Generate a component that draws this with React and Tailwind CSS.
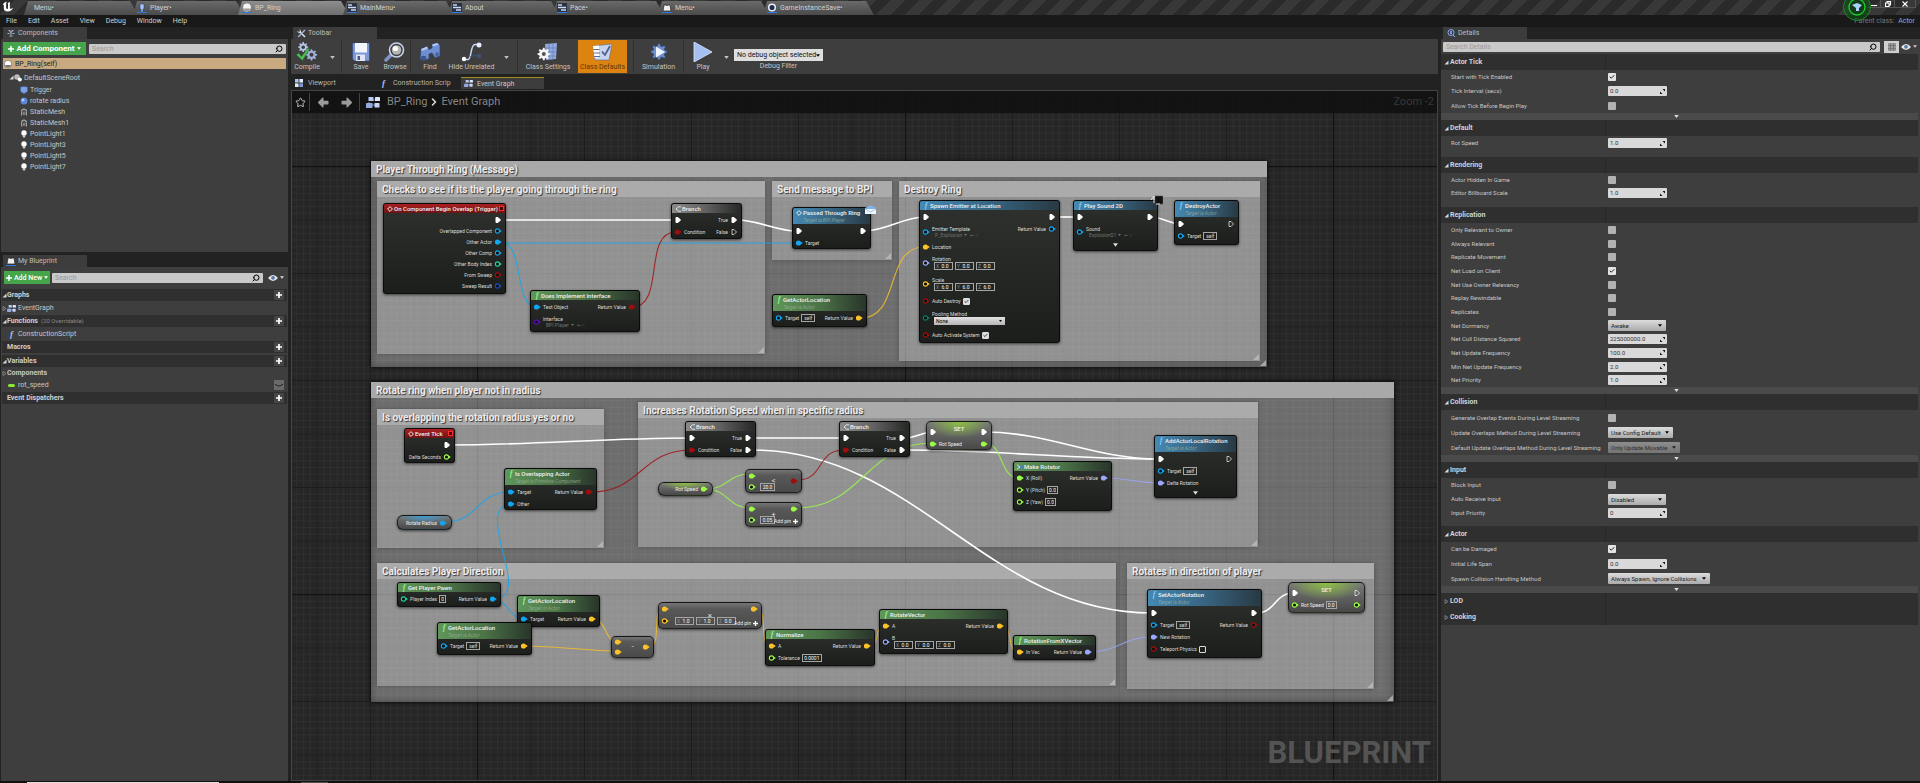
import { useState } from 'react';
import { ArrowBigLeft, ArrowBigRight, Check, ChevronRight, Search, Star } from 'lucide-react';

const DOC_TABS = [
  { name: 'Menu•', icon: null },
  { name: 'Player•', icon: 'pawn' },
  { name: 'BP_Ring', icon: 'ball' },
  { name: 'MainMenu•', icon: 'widget' },
  { name: 'About', icon: 'widget' },
  { name: 'Pace•', icon: 'widget' },
  { name: 'Menu•', icon: 'level' },
  { name: 'GameInstanceSave•', icon: 'ring' },
];

const COMPONENTS = [
  { name: 'Trigger', icon: 'box' },
  { name: 'rotate radius', icon: 'sphere' },
  { name: 'StaticMesh', icon: 'mesh' },
  { name: 'StaticMesh1', icon: 'mesh' },
  { name: 'PointLight1', icon: 'light' },
  { name: 'PointLight3', icon: 'light' },
  { name: 'PointLight5', icon: 'light' },
  { name: 'PointLight7', icon: 'light' },
];

const DETAILS = [
  {
    title: 'Actor Tick', body: 'min-h-[43px]', more: true,
    rows: [
      { label: 'Start with Tick Enabled', check: true },
      { label: 'Tick Interval (secs)', num: '0.0' },
      { label: 'Allow Tick Before Begin Play', check: false },
    ],
  },
  { title: 'Default', body: 'min-h-[21px] pb-[7px]', rows: [{ label: 'Rot Speed', num: '1.0' }] },
  {
    title: 'Rendering', body: 'min-h-[34px] pb-[7px]',
    rows: [
      { label: 'Actor Hidden In Game', check: false },
      { label: 'Editor Billboard Scale', num: '1.0' },
    ],
  },
  {
    title: 'Replication', body: 'min-h-[164px]', more: true,
    rows: [
      { label: 'Only Relevant to Owner', check: false },
      { label: 'Always Relevant', check: false },
      { label: 'Replicate Movement', check: false },
      { label: 'Net Load on Client', check: true },
      { label: 'Net Use Owner Relevancy', check: false },
      { label: 'Replay Rewindable', check: false },
      { label: 'Replicates', check: false },
      { label: 'Net Dormancy', select: 'Awake', w: 'w-[58px]' },
      { label: 'Net Cull Distance Squared', num: '225000000.0' },
      { label: 'Net Update Frequency', num: '100.0' },
      { label: 'Min Net Update Frequency', num: '2.0' },
      { label: 'Net Priority', num: '1.0' },
    ],
  },
  {
    title: 'Collision', body: 'min-h-[45px]', more: true,
    rows: [
      { label: 'Generate Overlap Events During Level Streaming', check: false },
      { label: 'Update Overlaps Method During Level Streaming', select: 'Use Config Default', w: 'w-[65px]' },
      { label: 'Default Update Overlaps Method During Level Streaming', select: 'Only Update Movable', w: 'w-[72px]', disabled: true },
    ],
  },
  {
    title: 'Input', body: 'min-h-[48px] pb-[6px]',
    rows: [
      { label: 'Block Input', check: false },
      { label: 'Auto Receive Input', select: 'Disabled', w: 'w-[58px]' },
      { label: 'Input Priority', num: '0' },
    ],
  },
  {
    title: 'Actor', body: 'min-h-[44px]', more: true,
    rows: [
      { label: 'Can be Damaged', check: true },
      { label: 'Initial Life Span', num: '0.0' },
      { label: 'Spawn Collision Handling Method', select: 'Always Spawn, Ignore Collisions', w: 'w-[102px]' },
    ],
  },
  { title: 'LOD', closed: true },
  { title: 'Cooking', closed: true },
];

// where the graph's origin sits relative to the view
const PAN = { x: -292, y: -91 };

const C = {
  exec: '#ffffff',
  obj: '#12a5f0',
  red: '#a00d0d',
  vec: '#fdc227',
  rot: '#9aa8ff',
  float: '#9bfb45',
  int: '#1fd79c',
  struct: '#1450c8',
  cls: '#5a12b0',
  enm: '#0b7d6b',
};

const COMMENTS = [
  { t: 'Player Through Ring (Message)', x: 371, y: 161, w: 896, h: 206, outer: true },
  { t: 'Checks to see if its the player going through the ring', x: 377, y: 181, w: 388, h: 173 },
  { t: 'Send message to BPI', x: 772, y: 181, w: 120, h: 79 },
  { t: 'Destroy Ring', x: 899, y: 181, w: 361, h: 180 },
  { t: 'Rotate ring when player not in radius', x: 371, y: 382, w: 1023, h: 320, outer: true },
  { t: 'Is overlapping the rotation radius yes or no', x: 377, y: 409, w: 227, h: 139 },
  { t: 'Increases Rotation Speed when in specific radius', x: 638, y: 402, w: 620, h: 145 },
  { t: 'Calculates Player Direction', x: 377, y: 563, w: 739, h: 123 },
  { t: 'Rotates in direction of player', x: 1127, y: 563, w: 247, h: 126 },
];

// [color, x1, y1, x2, y2, tangent]
const WIRES = [
  ['exec', 502, 220, 676, 220],
  ['obj', 502, 243, 796, 243],
  ['obj', 502, 243, 536, 307, 22],
  ['red', 632, 307, 676, 232, 34],
  ['exec', 738, 220, 796, 231],
  ['exec', 865, 231, 924, 217],
  ['vec', 861, 318, 924, 247, 40],
  ['exec', 1054, 217, 1079, 217],
  ['exec', 1152, 217, 1180, 224],
  ['exec', 450, 445, 690, 438],
  ['red', 591, 492, 691, 450, 50],
  ['obj', 445, 522, 510, 492, 34],
  ['obj', 495, 599, 522, 619, 10],
  ['vec', 593, 619, 618, 642, 14],
  ['vec', 526, 646, 618, 651],
  ['vec', 649, 647, 664, 608, 14],
  ['vec', 756, 609, 771, 646, 14],
  ['vec', 868, 646, 886, 626, 14],
  ['vec', 1001, 626, 1019, 652, 14],
  ['rot', 1088, 652, 1153, 637, 30],
  ['exec', 1256, 613, 1294, 593, 20],
  ['exec', 752, 438, 844, 438],
  ['exec', 752, 450, 1152, 613, 165],
  ['red', 797, 480, 844, 450, 28],
  ['float', 797, 508, 932, 443, 66],
  ['float', 706, 489, 750, 474, 22],
  ['float', 706, 489, 750, 508, 22],
  ['exec', 906, 438, 932, 432],
  ['exec', 906, 450, 1159, 459, 90],
  ['exec', 984, 432, 1159, 459, 66],
  ['float', 984, 443, 1019, 478, 20],
  ['rot', 1106, 478, 1159, 483, 20],
];

const BRANCH_ROWS = falseOn => [
  { l: { pin: 'exec', on: true }, r: { pin: 'exec', on: true, label: 'True' } },
  { l: { pin: 'red', on: true, label: 'Condition' }, r: { pin: 'exec', on: falseOn, label: 'False' } },
];
const ACTOR_LOC = self => [
  { l: { pin: 'obj', on: !self, label: 'Target', self }, r: { pin: 'vec', on: true, label: 'Return Value' } },
];
const EXEC_ROW = { l: { pin: 'exec', on: true }, r: { pin: 'exec', on: true } };

const NODES = [
  {
    kind: 'event', title: 'On Component Begin Overlap (Trigger)', x: 383, y: 203, w: 123, h: 91, delegate: true,
    rows: [
      { r: { pin: 'exec', on: true } },
      { r: { pin: 'obj', label: 'Overlapped Component' } },
      { r: { pin: 'obj', on: true, label: 'Other Actor' } },
      { r: { pin: 'obj', label: 'Other Comp' } },
      { r: { pin: 'int', label: 'Other Body Index' } },
      { r: { pin: 'red', label: 'From Sweep' } },
      { r: { pin: 'struct', label: 'Sweep Result' } },
    ].map(r => ({ ...r, h: 'h-[11px]' })),
  },
  {
    kind: 'pure', title: 'Does Implement Interface', x: 530, y: 290, w: 110, h: 42,
    rows: [
      { l: { pin: 'obj', on: true, label: 'Test Object' }, r: { pin: 'red', on: true, label: 'Return Value' } },
      { h: 'h-[17px]', l: { pin: 'cls', label: 'Interface', asset: 'BPI Player' } },
    ],
  },
  { kind: 'branch', title: 'Branch', x: 671, y: 203, w: 71, h: 36, rows: BRANCH_ROWS(false) },
  {
    kind: 'func', icon: 'event', title: 'Passed Through Ring', sub: 'Target is BPI Player', x: 792, y: 207, w: 79, h: 42, badge: 'mail',
    rows: [EXEC_ROW, { l: { pin: 'obj', on: true, label: 'Target' } }],
  },
  { kind: 'pure', title: 'GetActorLocation', sub: 'Target is Actor', x: 772, y: 294, w: 95, h: 33, rows: ACTOR_LOC(true) },
  {
    kind: 'func', title: 'Spawn Emitter at Location', x: 919, y: 200, w: 141, h: 143,
    rows: [
      EXEC_ROW,
      { h: 'h-[18px]', l: { pin: 'obj', label: 'Emitter Template', asset: 'P_Explosion' }, r: { pin: 'obj', label: 'Return Value' } },
      { l: { pin: 'vec', on: true, label: 'Location' } },
      { h: 'h-[20px]', l: { pin: 'rot', label: 'Rotation', axes: ['0.0', '0.0', '0.0'] } },
      { h: 'h-[22px]', l: { pin: 'vec', label: 'Scale', axes: ['6.0', '6.0', '6.0'] } },
      { l: { pin: 'red', label: 'Auto Destroy', check: true } },
      { h: 'h-[22px]', l: { pin: 'enm', label: 'Pooling Method', select: 'None' } },
      { l: { pin: 'red', label: 'Auto Activate System', check: true } },
    ],
  },
  {
    kind: 'func', title: 'Play Sound 2D', x: 1073, y: 200, w: 85, h: 51, badge: 'latent', more: true,
    rows: [EXEC_ROW, { h: 'h-[18px]', l: { pin: 'obj', label: 'Sound', asset: 'Explosion01' } }],
  },
  {
    kind: 'func', title: 'DestroyActor', sub: 'Target is Actor', x: 1174, y: 200, w: 65, h: 45,
    rows: [
      { l: { pin: 'exec', on: true }, r: { pin: 'exec' } },
      { l: { pin: 'obj', label: 'Target', self: true } },
    ],
  },
  {
    kind: 'event', title: 'Event Tick', x: 404, y: 428, w: 51, h: 35, delegate: true,
    rows: [{ r: { pin: 'exec', on: true } }, { r: { pin: 'float', label: 'Delta Seconds' } }],
  },
  {
    kind: 'pure', title: 'Is Overlapping Actor', sub: 'Target is Primitive Component', x: 504, y: 468, w: 93, h: 42,
    rows: [
      { l: { pin: 'obj', on: true, label: 'Target' }, r: { pin: 'red', on: true, label: 'Return Value' } },
      { l: { pin: 'obj', on: true, label: 'Other' } },
    ],
  },
  { kind: 'branch', title: 'Branch', x: 685, y: 421, w: 71, h: 36, rows: BRANCH_ROWS(true) },
  { kind: 'branch', title: 'Branch', x: 839, y: 421, w: 71, h: 36, rows: BRANCH_ROWS(true) },
  {
    kind: 'pure', icon: 'make', title: 'Make Rotator', x: 1013, y: 461, w: 99, h: 50,
    rows: [
      { l: { pin: 'float', on: true, label: 'X (Roll)' }, r: { pin: 'rot', on: true, label: 'Return Value' } },
      { l: { pin: 'float', label: 'Y (Pitch)', box: '0.0' } },
      { l: { pin: 'float', label: 'Z (Yaw)', box: '0.0' } },
    ],
  },
  {
    kind: 'func', title: 'AddActorLocalRotation', sub: 'Target is Actor', x: 1154, y: 435, w: 83, h: 63, more: true,
    rows: [
      { l: { pin: 'exec', on: true }, r: { pin: 'exec' } },
      { l: { pin: 'obj', label: 'Target', self: true } },
      { l: { pin: 'rot', on: true, label: 'Delta Rotation' } },
    ],
  },
  {
    kind: 'pure', title: 'Get Player Pawn', x: 397, y: 582, w: 104, h: 25,
    rows: [{ l: { pin: 'int', label: 'Player Index', box: '0', boxW: 'w-[7px]' }, r: { pin: 'obj', on: true, label: 'Return Value' } }],
  },
  { kind: 'pure', title: 'GetActorLocation', sub: 'Target is Actor', x: 517, y: 595, w: 83, h: 32, rows: ACTOR_LOC(false) },
  { kind: 'pure', title: 'GetActorLocation', sub: 'Target is Actor', x: 437, y: 622, w: 95, h: 33, rows: ACTOR_LOC(true) },
  {
    kind: 'pure', title: 'Normalize', x: 765, y: 629, w: 110, h: 37,
    rows: [
      { l: { pin: 'vec', on: true, label: 'A' }, r: { pin: 'vec', on: true, label: 'Return Value' } },
      { l: { pin: 'float', label: 'Tolerance', box: '0.0001', boxW: 'w-[20px]' } },
    ],
  },
  {
    kind: 'pure', title: 'RotateVector', x: 879, y: 609, w: 129, h: 45,
    rows: [
      { l: { pin: 'vec', on: true, label: 'A' }, r: { pin: 'vec', on: true, label: 'Return Value' } },
      { h: 'h-[20px]', l: { pin: 'rot', label: 'B', axes: ['0.0', '0.0', '0.0'] } },
    ],
  },
  {
    kind: 'pure', title: 'RotationFromXVector', x: 1013, y: 635, w: 83, h: 25,
    rows: [{ l: { pin: 'vec', on: true, label: 'In Vec' }, r: { pin: 'rot', on: true, label: 'Return Value' } }],
  },
  {
    kind: 'func', title: 'SetActorRotation', sub: 'Target is Actor', x: 1147, y: 589, w: 115, h: 69,
    rows: [
      EXEC_ROW,
      { l: { pin: 'obj', label: 'Target', self: true }, r: { pin: 'red', label: 'Return Value' } },
      { l: { pin: 'rot', on: true, label: 'New Rotation' } },
      { l: { pin: 'red', label: 'Teleport Physics', check: false } },
    ],
  },
];

const HEADER = {
  event: 'bg-linear-to-b from-[#ad2020] to-[#6c1414]',
  pure: 'bg-linear-to-r from-[#5f965a] via-[#4b7447] to-[#28352a]',
  func: 'bg-linear-to-r from-[#4489b4] via-[#376582] to-[#283943]',
  branch: 'bg-linear-to-r from-[#8a8a8a] via-[#606060] to-[#262826]',
};

const SHADE = 'border border-black/70 shadow-[0_1px_3px_rgba(0,0,0,0.6)]';

/* ---------- small icons ---------- */

function TabIcon({ type }) {
  if (!type) return null;
  return (
    <svg viewBox="0 0 10 10" className="h-[10px] w-[10px] shrink-0">
      <rect y="9" width="10" height="1" fill="#2d7be0" />
      {type === 'pawn' && <path d="M3 1h4v5H6v3H4V6H3z" fill="#a9c3f5" stroke="#26457c" strokeWidth=".6" />}
      {type === 'ball' && <><circle cx="5" cy="4.5" r="3.9" fill="#f4f4f4" /><path d="M1.2 5.5a4 4 0 0 0 7.6 0z" fill="#999" /></>}
      {type === 'widget' && (
        <>
          <rect width="10" height="9" fill="#2a3140" />
          <path d="M1 2h4M1 4.500h8M4 7h5" stroke="#c9d8f6" strokeWidth="1.400" />
        </>
      )}
      {type === 'level' && <path d="M1 8l1-6h2.500l.5 1 .5-1H8l1 6z" fill="#eee" stroke="#222" strokeWidth=".7" />}
      {type === 'ring' && <circle cx="5" cy="4.500" r="3.300" fill="#1f2c4c" stroke="#e8eefc" strokeWidth="1.500" />}
    </svg>
  );
}

function TreeIcon({ type }) {
  return (
    <svg viewBox="0 0 8 8" className="h-2 w-2 shrink-0">
      {type === 'root' && <><circle cx="3" cy="3" r="2.800" fill="#bbb" /><circle cx="5.800" cy="5.500" r="2" fill="#fff" /></>}
      {type === 'self' && <><circle cx="4" cy="4" r="3.700" fill="#fff" stroke="#555" strokeWidth=".6" /><path d="M.6 5a3.700 3.700 0 0 0 6.800 0z" fill="#777" /></>}
      {type === 'box' && <path d="M.5 1L4 .5l3.500.5v4.500L4 7.800.5 5.500z" fill="#7ba0e8" stroke="#41639f" strokeWidth=".6" />}
      {type === 'sphere' && <><circle cx="4" cy="4" r="3.500" fill="#5c86d8" /><circle cx="3" cy="3" r="1.300" fill="#bcd2ff" /></>}
      {type === 'mesh' && <path d="M1.500 7.500V4a2.500 2.500 0 0 1 5 0v3.500M3.200 7V4.500a.9.900 0 0 1 1.700 0V7M1 2.500L4 .7l3 1.800" fill="none" stroke="#aaa" strokeWidth=".9" />}
      {type === 'light' && <><circle cx="4" cy="2.900" r="2.700" fill="#fff" /><path d="M2.700 5h2.600v1.700L4 7.900 2.700 6.700z" fill="#ccc" /></>}
      {type === 'pins' && <path d="M1.500 1.500h1.500v1.500h2V1.500h1.500M4 3v3M2.500 7h3M.5 4.500h2M5.500 4.500h2" fill="none" stroke="#a9b8d8" strokeWidth="1" />}
    </svg>
  );
}

function GraphIcon({ className }) {
  return (
    <svg viewBox="0 0 14 11" className={className}>
      <path d="M3 5v4M6 3h3M6 8h3" stroke="#7d8fb8" strokeWidth="1" />
      <rect x="2.500" y="0" width="5" height="4" rx=".6" fill="#b9c9f0" />
      <rect x="9" y="0" width="5" height="4" rx=".6" fill="#dfe7fb" />
      <rect x="0" y="6" width="6.500" height="5" rx=".6" fill="#93a9e0" />
      <rect x="8.500" y="6" width="5" height="4.500" rx=".6" fill="#c7d4f5" />
    </svg>
  );
}

function ViewportIcon() {
  return (
    <svg viewBox="0 0 8 8" className="mr-px ml-px h-[8px] w-[8px]">
      <rect width="3.600" height="3.600" fill="#a9c4f0" />
      <rect x="4.400" width="3.600" height="3.600" fill="#e4ecfb" />
      <rect y="4.400" width="3.600" height="3.600" fill="#dde8fb" />
      <rect x="4.400" y="4.400" width="3.600" height="3.600" fill="#7f9cd4" />
    </svg>
  );
}

function Eye() {
  return (
    <svg viewBox="0 0 10 6" className="h-[6px] w-[10px]">
      <path d="M0 3Q5-3 10 3 5 9 0 3z" fill="#e8e8e8" />
      <circle cx="5" cy="2.800" r="1.900" fill="#5779a8" />
    </svg>
  );
}

function Caret({ className }) {
  return (
    <svg viewBox="0 0 6 4" className={className ?? 'h-[3px] w-[5px]'}>
      <path d="M0 0h6L3 4z" fill="currentColor" />
    </svg>
  );
}

function Twisty({ open }) {
  return (
    <svg viewBox="0 0 5 5" className="h-[5px] w-[5px] shrink-0">
      {open
        ? <path d="M4.500.5v4h-4z" fill="#d8d8d8" />
        : <path d="M1 .5v4L4 2.500z" fill="none" stroke="#999" strokeWidth=".7" />}
    </svg>
  );
}

function Fn({ className }) {
  return <i className={`font-['Liberation_Serif',serif] font-bold leading-none ${className}`}>f</i>;
}

/* ---------- toolbar ---------- */

const GEAR = 'M9 1h2l.5 2.300 1.600.7 2-1.300 1.400 1.400-1.300 2 .7 1.600L18 8v2l-2.100.5-.7 1.600 1.300 2-1.400 1.400-2-1.300-1.600.7L11 17H9l-.5-2.100-1.600-.7-2 1.300-1.400-1.400 1.300-2-.7-1.600L2 10V8l2.100-.3.7-1.600-1.300-2 1.400-1.400 2 1.300 1.600-.7z';

function ToolIcon({ type }) {
  return (
    <svg viewBox="0 0 22 20" className="h-[20px] w-[22px]">
      {type === 'compile' && (
        <>
          <path d={GEAR} transform="translate(1 -.5) scale(.62)" fill="#b4c3e6" />
          <circle cx="7.200" cy="5.200" r="1.800" fill="#3e3e3e" />
          <path d={GEAR} transform="translate(8.500 6.500) scale(.7)" fill="#9fb0d8" />
          <circle cx="15.500" cy="12.800" r="2" fill="#3e3e3e" />
          <path d="M.5 13l2-2 3 3.500L12 6l1.500 1L6.500 18.500z" fill="#4fc05a" stroke="#256b2c" strokeWidth=".5" />
        </>
      )}
      {type === 'save' && (
        <>
          <path d="M2.500 1h17v18h-15l-2-2z" fill="#7c98d8" stroke="#2c3f6c" strokeWidth=".6" />
          <rect x="5" y="1" width="12" height="9.500" fill="#f2f5fc" />
          <rect x="6" y="12.500" width="9" height="6.500" fill="#dfe5f3" />
          <rect x="7.500" y="14" width="2.500" height="4" fill="#45588a" />
        </>
      )}
      {type === 'browse' && (
        <>
          <path d="M7 13l-5 5" stroke="#7f93c8" strokeWidth="3.500" strokeLinecap="round" />
          <circle cx="12.500" cy="8" r="7" fill="#3d3d3d" stroke="#c7d3ef" strokeWidth="1.600" />
          <circle cx="12.500" cy="8" r="4.800" fill="#b5b5b5" />
          <circle cx="11.500" cy="6.500" r="2.600" fill="#fff" />
        </>
      )}
      {type === 'find' && (
        <>
          <path d="M2 7l6-2.500 2 3 3-1.500V2.500l5-1.500 3 2v11l-5 2-3-5-3 1v5l-6 1.500L1 17z" fill="#6f8fd2" stroke="#2c406e" strokeWidth=".7" />
          <path d="M2 7l6-2.500 1 2-6 2.500zM13 2.500L18 1l2 1.500-6 2z" fill="#b4c8f2" />
          <ellipse cx="4.500" cy="16" rx="2.800" ry="2.200" fill="#3b568f" />
          <ellipse cx="18" cy="12.500" rx="2" ry="2.200" fill="#4a66a4" />
        </>
      )}
      {type === 'hide' && (
        <>
          <path d="M3 17.500h4c4 0 2-15 7-15h3" fill="none" stroke="#c9d9f8" strokeWidth="1.500" />
          <path d="M9 15c3-1 3-2 8-1" fill="none" stroke="#3c5070" strokeWidth="1.200" />
          <circle cx="3" cy="17" r="2.200" fill="#fff" />
          <circle cx="18" cy="3" r="2.500" fill="#e3edff" />
          <circle cx="18" cy="14" r="2.200" fill="#3d5478" />
        </>
      )}
      {type === 'settings' && (
        <>
          <path d="M8 2l12-1-1 16-10 1z" fill="#94aadd" />
          <path d="M8 6h12M8 10h12M8 14h11M12 2v15M16 2v15" stroke="#5a76b3" strokeWidth=".6" />
          <path d={GEAR} transform="translate(-1 5) scale(.78)" fill="#f5f5f5" />
          <circle cx="6.800" cy="12" r="2" fill="#555" />
        </>
      )}
      {type === 'defaults' && (
        <>
          <path d="M1 4l19-2-3 16H3z" fill="#c8d3ee" stroke="#5b6c96" strokeWidth=".6" />
          <path d="M1 4l6-.6v12L2.500 16z" fill="#fff" />
          <path d="M1.500 7.500h6M2 11h6M2 14.500h6" stroke="#5a6c98" strokeWidth="1" />
          <path d="M10 9.500l3 3.500 5-9" fill="none" stroke="#4e628f" strokeWidth="1.800" />
        </>
      )}
      {type === 'sim' && (
        <>
          <path d={GEAR} transform="translate(1 .8)" fill="#6d8fce" stroke="#2c426f" strokeWidth=".5" />
          <path d="M8 4.500l9 5.500-9 5.500z" fill="#eef4ff" />
        </>
      )}
      {type === 'play' && <path d="M2 0l18 10L2 20z" fill="#a5c0f0" stroke="#dce8ff" strokeWidth=".8" />}
    </svg>
  );
}

function Tool({ icon, label, w, active }) {
  return (
    <button
      type="button"
      className={`flex shrink-0 flex-col items-center justify-between whitespace-nowrap pt-[2px] pb-[2px] ${w} ${active ? 'bg-[#dc840f] text-[#5d3708]' : 'text-[#c4c4c4]'}`}
    >
      <ToolIcon type={icon} />
      <span className="text-[7px] leading-[8px]">{label}</span>
    </button>
  );
}

function Drop({ w, label }) {
  return (
    <button type="button" aria-label={label} className={`flex shrink-0 items-center justify-center pt-[2px] text-[#c4c4c4] ${w}`}>
      <Caret />
    </button>
  );
}

/* ---------- panels ---------- */

function PanelTab({ icon, label }) {
  return (
    <div className="flex h-[12px] w-[84px] items-center gap-[2px] bg-[#3c3c3c] pl-[3px] text-[7px] leading-[8px] text-[#bdbdbd]">
      <span className="flex w-[10px] justify-center">{icon}</span>
      <span>{label}</span>
    </div>
  );
}

function SearchBox({ placeholder }) {
  return (
    <label className="flex h-[10px] min-w-0 flex-1 items-center rounded-[1px] bg-[#c9c9c9] px-[3px]">
      <input
        aria-label={placeholder}
        placeholder={placeholder}
        className="min-w-0 flex-1 bg-transparent text-[7px] leading-[8px] text-black outline-none placeholder:text-[#9a9a9a]"
      />
      <Search size={8} strokeWidth={3} className="-scale-x-100 text-black" />
    </label>
  );
}

function PlusButton({ label }) {
  return (
    <button type="button" aria-label={label} className="flex h-[10px] w-[10px] items-center justify-center rounded-[1px] bg-[#464646]">
      <svg viewBox="0 0 6 6" className="h-[6px] w-[6px]"><path d="M3 0v6M0 3h6" stroke="#fff" strokeWidth="1.700" /></svg>
    </button>
  );
}

function BpHeader({ title, note, arrow }) {
  return (
    <div className="flex h-[12px] items-center bg-[#2f2f2f] pr-[3px] text-[7px] leading-[8px] font-bold text-[#cfcfcf]">
      <span className="flex w-[5px] shrink-0">{arrow && <Twisty open />}</span>
      <span>{title}</span>
      {note && <span className="ml-[3px] text-[6px] font-normal text-[#8a8a8a]">{note}</span>}
      <span className="ml-auto"><PlusButton label={`Add ${title}`} /></span>
    </div>
  );
}

function LeftSide() {
  return (
    <div className="flex w-[288px] shrink-0 flex-col bg-[#222]">
      <div className="pl-[3px]"><PanelTab icon={<TreeIcon type="pins" />} label="Components" /></div>
      <section className="ml-px flex h-[213px] flex-col bg-[#3e3e3e] px-[2px] pt-[3px]">
        <div className="flex items-center gap-[3px]">
          <button type="button" className="flex h-[13px] w-[83px] items-center justify-center gap-[2px] bg-[#46a54b] text-[8px] leading-[10px] font-bold whitespace-nowrap text-white">
            <svg viewBox="0 0 6 6" className="h-[6px] w-[6px]"><path d="M3 0v6M0 3h6" stroke="#fff" strokeWidth="1.500" /></svg>
            Add Component
            <Caret className="h-[3px] w-[4px]" />
          </button>
          <SearchBox placeholder="Search" />
        </div>
        <ul className="text-[7px] leading-[8px] text-[#c6c6c6]">
          <li className="mt-[3px] mb-[3px] flex h-[11px] items-center gap-[3px] bg-[#c9aa80] pl-px text-[#1c1a16]">
            <TreeIcon type="self" />BP_Ring(self)
          </li>
          <li className="mb-px flex h-[11px] items-center pl-[6px]">
            <Twisty open /><TreeIcon type="root" /><span className="ml-[2px]">DefaultSceneRoot</span>
          </li>
          {COMPONENTS.map(c => (
            <li key={c.name} className="flex h-[11px] items-center gap-[2px] pl-[17px]">
              <TreeIcon type={c.icon} />{c.name}
            </li>
          ))}
        </ul>
      </section>
      <div className="mt-[3px] pl-[3px]">
        <PanelTab icon={<TabIcon type="level" />} label="My Blueprint" />
      </div>
      <section className="ml-px flex-1 bg-[#3e3e3e] px-px pt-[4px]">
        <div className="mb-[5px] flex items-center gap-[2px] pl-[2px]">
          <button type="button" className="flex h-[13px] w-[46px] items-center justify-center gap-[2px] bg-[#46a54b] text-[7px] leading-[8px] font-medium whitespace-nowrap text-white">
            <svg viewBox="0 0 6 6" className="h-[6px] w-[6px]"><path d="M3 0v6M0 3h6" stroke="#fff" strokeWidth="1.500" /></svg>
            Add New
            <Caret className="h-[3px] w-[4px]" />
          </button>
          <SearchBox placeholder="Search" />
          <button type="button" aria-label="View options" className="flex w-[22px] items-center justify-center gap-[2px] text-[#ddd]">
            <Eye /><Caret className="h-[3px] w-[4px]" />
          </button>
        </div>
        <div className="text-[7px] leading-[8px] text-[#c6c6c6]">
          <BpHeader title="Graphs" arrow />
          <div className="flex h-[14px] items-center">
            <Twisty /><GraphIcon className="mr-[2px] h-[7px] w-[9px]" />EventGraph
          </div>
          <BpHeader title="Functions" note="(20 Overridable)" arrow />
          <div className="flex h-[14px] items-center gap-[2px] pl-[5px]">
            <span className="flex w-[9px] justify-center text-[#a9bff0]"><Fn className="text-[9px]" /></span>ConstructionScript
          </div>
          <BpHeader title="Macros" />
          <div className="mt-[2px]"><BpHeader title="Variables" arrow /></div>
          <div className="flex h-[12px] items-center font-bold"><Twisty />Components</div>
          <div className="flex h-[12px] items-center pr-[3px] pl-[6px]">
            <span className="mr-[3px] h-[3px] w-[7px] rounded-full bg-[#8be831]" />rot_speed
            <span className="ml-auto flex h-[10px] w-[10px] items-end justify-center bg-[#6a6a6a] pb-[3px]">
              <svg viewBox="0 0 8 3" className="h-[3px] w-[8px]"><path d="M0 0q4 4 8 0" fill="none" stroke="#222" /></svg>
            </span>
          </div>
          <div className="mt-px"><BpHeader title="Event Dispatchers" /></div>
        </div>
      </section>
    </div>
  );
}

function DetailSelect({ row, id }) {
  return (
    <div className={`relative ${row.w} ${row.disabled ? 'opacity-50' : ''}`}>
      <select
        id={id}
        disabled={row.disabled}
        className="block h-[11px] w-full appearance-none rounded-[1px] bg-linear-to-b from-[#dcdcdc] to-[#ababab] pl-[3px] text-[6px] leading-[11px] text-[#1b1b1b]"
      >
        <option>{row.select}</option>
      </select>
      <Caret className="pointer-events-none absolute top-[4px] right-[4px] h-[3px] w-[4px] text-black" />
    </div>
  );
}

function Tick({ id, on, size }) {
  const [checked, setChecked] = useState(on);
  return (
    <span className="relative inline-flex">
      <input
        id={id}
        type="checkbox"
        checked={checked}
        onChange={e => setChecked(e.target.checked)}
        className={`appearance-none rounded-[1px] ${size ?? 'h-[8px] w-[8px] bg-[#b2b2b2] checked:bg-[#e4e4e4]'}`}
      />
      {checked && <Check strokeWidth={4} className="pointer-events-none absolute inset-0 h-full w-full p-px text-[#222]" />}
    </span>
  );
}

function DetailRow({ row, id }) {
  return (
    <div className="flex min-h-0 grow basis-[0px] items-center">
      <label htmlFor={id} className="w-[155px] shrink-0 overflow-hidden text-[6px] leading-[8px] whitespace-nowrap text-[#c6c6c6]">
        {row.label}
      </label>
      <div className="ml-[2px]">
        {row.check !== undefined && <span className="flex"><Tick id={id} on={row.check} /></span>}
        {row.num !== undefined && (
          <div className="flex h-[10px] w-[59px] items-center rounded-[1px] bg-[#d9d9d9] px-[2px]">
            <input id={id} defaultValue={row.num} className="min-w-0 flex-1 bg-transparent text-[6px] leading-[8px] text-[#333] outline-none" />
            <svg viewBox="0 0 6 6" className="h-[5px] w-[5px]">
              <path d="M3 0h3v3zM0 3v3h3z" fill="#111" />
            </svg>
          </div>
        )}
        {row.select !== undefined && <DetailSelect row={row} id={id} />}
      </div>
    </div>
  );
}

function RightSide() {
  return (
    <div className="flex w-[479px] shrink-0 flex-col bg-[#222]">
      <div className="pl-[2px]">
        <PanelTab icon={<svg viewBox="0 0 8 8" className="h-2 w-2"><circle cx="4" cy="3.500" r="3" fill="#20365e" stroke="#8fb0ee" /><path d="M4 2v3" stroke="#fff" /><path d="M6 6l2 2" stroke="#8fb0ee" /></svg>} label="Details" />
      </div>
      <section className="flex-1 bg-[#3e3e3e] pr-[2px]">
        <div className="flex h-[15px] items-center pr-px pl-[2px]">
          <SearchBox placeholder="Search Details" />
          <button type="button" aria-label="Property matrix" className="ml-[4px] flex h-[12px] w-[15px] items-center justify-center bg-[#cfcfcf]">
            <svg viewBox="0 0 8 8" className="h-2 w-2"><rect width="8" height="8" fill="#999" /><path d="M0 2.500h8M0 5.500h8M2.500 0v8M5.500 0v8" stroke="#777" /></svg>
          </button>
          <button type="button" aria-label="View options" className="ml-[2px] flex items-center gap-[2px] text-[#ccc]">
            <Eye /><Caret className="h-[3px] w-[4px]" />
          </button>
        </div>
        {DETAILS.map(s => (
          <div key={s.title}>
            <h3 className="flex h-[16px] items-center bg-[#2f2f2f] pl-[3px]">
              <Twisty open={!s.closed} />
              <span className="w-[157px] border-r border-[#272727] pl-px text-[7px] leading-[16px] font-bold text-[#d2d2d2]">{s.title}</span>
            </h3>
            {s.rows && (
              <div className={`flex flex-col pl-[10px] ${s.body}`}>
                {s.rows.map(r => <DetailRow key={r.label} row={r} id={`${s.title}-${r.label}`} />)}
              </div>
            )}
            {s.more && (
              <button type="button" aria-label={`More ${s.title}`} className="flex h-[7px] w-full items-center justify-center bg-[#4a4a4a] pr-[6px] text-[#ddd]">
                <Caret className="h-[3px] w-[5px]" />
              </button>
            )}
          </div>
        ))}
      </section>
    </div>
  );
}

/* ---------- graph ---------- */

function Pin({ type, on }) {
  const color = C[type];
  if (type === 'exec') {
    return (
      <svg viewBox="0 0 8 8" className="h-[8px] w-[8px] shrink-0">
        <path d="M2 1.500h2L6.500 4 4 6.500H2z" fill={on ? '#fff' : 'none'} stroke="#fff" strokeWidth={on ? 1 : 0.7} strokeLinejoin="round" />
      </svg>
    );
  }
  return (
    <svg viewBox="0 0 8 8" className="h-[8px] w-[8px] shrink-0">
      <circle cx="3.500" cy="4" r={on ? 2.6 : 2.1} fill={on ? color : '#0c0e0c'} stroke={color} strokeWidth={on ? 0 : 1.1} />
      <path d="M6 2.800L7.800 4 6 5.200z" fill={color} />
    </svg>
  );
}

function Field({ value, axis, w, label }) {
  return (
    <span className={`flex h-[8px] items-center border border-[#a5a5a5] px-px text-[5px] leading-[6px] ${w ?? 'w-[11px]'}`}>
      {axis && <span className="text-[#8a8a8a]">{axis}</span>}
      <input aria-label={label ?? 'value'} defaultValue={value} className="w-full min-w-0 bg-transparent text-center text-white outline-none" />
    </span>
  );
}

function Axes({ values, label }) {
  return (
    <span className="ml-[2px] flex gap-[2px]">
      {values.map((v, i) => <Field key={i} value={v} axis={'XYZ'[i]} w="w-[19px]" label={`${label} ${'XYZ'[i]}`} />)}
    </span>
  );
}

function Side({ s, right }) {
  return (
    <div className={`flex items-center gap-[2px] whitespace-nowrap ${right ? 'flex-row-reverse' : ''}`}>
      <Pin type={s.pin} on={s.on} />
      <div className="flex flex-col">
        <div className="flex items-center gap-[2px]">
          {s.label && <span>{s.label}</span>}
          {s.self && <span className="border border-[#a5a5a5] px-[2px] leading-[6px]">self</span>}
          {s.box && <Field value={s.box} w={s.boxW} label={s.label} />}
          {s.check !== undefined && (
            <Tick on={s.check} id={s.label} size="h-[7px] w-[7px] border border-[#ddd] checked:bg-[#ddd]" />
          )}
        </div>
        {s.axes && <Axes values={s.axes} label={s.label} />}
        {s.asset && (
          <span className="flex items-center gap-[2px] pl-[3px] text-[#6f736f]">
            {s.asset}<Caret className="h-[2px] w-[3px]" /><span className="ml-px">⇐ ○</span>
          </span>
        )}
        {s.select && (
          <span className="relative ml-[2px] w-[71px]">
            <select aria-label={s.label} className="block h-[8px] w-full appearance-none bg-linear-to-b from-[#e2e2e2] to-[#b5b5b5] pl-[2px] text-[5px] leading-[8px] text-black">
              <option>{s.select}</option>
            </select>
            <Caret className="pointer-events-none absolute top-[3px] right-[3px] h-[2px] w-[3px] text-black" />
          </span>
        )}
      </div>
    </div>
  );
}

function NodeIcon({ n }) {
  const icon = n.icon ?? n.kind;
  if (icon === 'event') {
    return <svg viewBox="0 0 6 6" className="h-[6px] w-[6px]"><path d="M3 .6L5.400 3 3 5.400.6 3z" fill="none" stroke="#eee" strokeWidth="1" /></svg>;
  }
  if (icon === 'branch') {
    return <svg viewBox="0 0 6 6" className="h-[6px] w-[6px]"><path d="M6 .8H3.500L1 3l2.500 2.200H6" fill="none" stroke="#eee" strokeWidth=".9" /></svg>;
  }
  if (icon === 'make') {
    return <svg viewBox="0 0 6 6" className="h-[6px] w-[6px]"><path d="M0 .8l3 2.200L0 5.200" fill="none" stroke="#dde6ff" /><circle cx="4.500" cy="3" r="1.500" fill="#3f7de0" /></svg>;
  }
  return <Fn className={n.kind === 'pure' ? 'text-[8px] text-[#8df08a]' : 'text-[8px] text-[#7cc9f5]'} />;
}

function Node({ n }) {
  return (
    <div
      className={`absolute flex flex-col rounded-[3px] bg-linear-to-b from-[#2e312e] to-[#1b1e1b] text-[5px] leading-[6px] text-[#dcdcdc] ${SHADE}`}
      style={{ left: n.x, top: n.y, width: n.w, height: n.h }}
    >
      <div className={`flex shrink-0 rounded-t-[2px] pl-[2px] ${n.sub ? 'h-[16px]' : 'h-[9px]'} ${HEADER[n.kind]}`}>
        <span className="flex h-[9px] w-[8px] shrink-0 items-center justify-center"><NodeIcon n={n} /></span>
        <div className="whitespace-nowrap">
          <div className="text-[6px] leading-[9px] font-medium text-[#f0f0f0]">{n.title}</div>
          {n.sub && <div className="text-[#a9b8a0] italic opacity-70">{n.sub}</div>}
        </div>
        {n.delegate && <span className="mt-[2px] mr-px ml-auto h-[5px] w-[5px] shrink-0 border border-[#ff2a2a] bg-[#3a0505]" />}
      </div>
      <div className="flex flex-col pt-px">
        {n.rows.map((r, i) => (
          <div key={i} className={`flex justify-between pr-[3px] pl-[2px] ${r.h ?? 'h-[12px]'}`}>
            {r.l ? <Side s={r.l} /> : <span />}
            {r.r && <div className="flex h-[12px] max-h-full items-center"><Side s={r.r} right /></div>}
          </div>
        ))}
      </div>
      {n.more && <Caret className="mt-[2px] h-[4px] w-[5px] self-center text-[#ddd]" />}
      {n.badge === 'mail' && (
        <svg viewBox="0 0 11 9" className="absolute -top-[3px] -right-[6px] h-[9px] w-[11px]">
          <path d="M0 3L5.500 0 11 3v6H0z" fill="#7fb2e6" />
          <path d="M0 4h11v5H0z" fill="#eef6ff" />
          <path d="M0 4l5.500 3L11 4" fill="none" stroke="#88a8cc" strokeWidth=".7" />
        </svg>
      )}
      {n.badge === 'latent' && (
        <svg viewBox="0 0 12 10" className="absolute -top-[6px] -right-[6px] h-[10px] w-[12px]">
          <rect x="4" y="1" width="8" height="8" fill="#111" stroke="#555" strokeWidth=".6" />
          <path d="M0 5l3-4v7M5 9h4" stroke="#eee" strokeWidth=".9" fill="none" />
        </svg>
      )}
    </div>
  );
}

const GLOW = {
  float: 'bg-[radial-gradient(ellipse_50%_60%_at_50%_0%,#8cc044,transparent),linear-gradient(#777,#484848)]',
  obj: 'bg-[radial-gradient(ellipse_50%_60%_at_50%_0%,#3f9bd0,transparent),linear-gradient(#777,#484848)]',
};

function Getter({ label, pin, x, y, w, h }) {
  return (
    <div
      className={`absolute flex items-center justify-end gap-[2px] rounded-[6px] pr-[4px] text-[5px] leading-[6px] text-[#eee] ${GLOW[pin]} ${SHADE}`}
      style={{ left: x, top: y, width: w, height: h }}
    >
      {label}<Pin type={pin} on />
    </div>
  );
}

function SetNode({ x, y, w, h, wired }) {
  return (
    <div
      className={`absolute rounded-[5px] pt-[4px] text-[5px] leading-[6px] text-[#eee] ${GLOW.float} ${SHADE}`}
      style={{ left: x, top: y, width: w, height: h }}
    >
      <div className="absolute inset-x-0 top-[3px] text-center text-[6px] leading-[7px] font-medium">SET</div>
      <div className="flex h-[12px] justify-between pr-[3px] pl-[2px]">
        <Side s={{ pin: 'exec', on: true }} />
        <Side s={{ pin: 'exec', on: wired }} right />
      </div>
      <div className="flex h-[12px] justify-between pr-[3px] pl-[2px]">
        <Side s={{ pin: 'float', on: wired, label: 'Rot Speed', box: wired ? undefined : '0.0' }} />
        <Side s={{ pin: 'float', on: wired }} right />
      </div>
    </div>
  );
}

function OpNode({ sym, pins, x, y, w, h, row, addPin, out, center }) {
  return (
    <div
      className={`absolute flex justify-between rounded-[5px] bg-linear-to-b from-[#757575] via-[#585858] via-25% to-[#4a4a4a] pr-[3px] pl-[2px] text-[5px] leading-[6px] text-[#eee] ${SHADE}`}
      style={{ left: x, top: y, width: w, height: h }}
    >
      <div>
        {pins.map((p, i) => (
          <div key={i} className={`flex items-center gap-[4px] ${row}`}>
            <Pin type={p.pin} on={p.on} />
            {p.box && <Field value={p.box} w="w-[15px]" label={sym} />}
            {p.axes && <Axes values={p.axes} label={sym} />}
          </div>
        ))}
      </div>
      <span className="pointer-events-none absolute inset-0 flex items-center justify-center text-[8px] leading-none text-[#ddd]">{sym}</span>
      <div className={`flex ${center ? 'items-center' : `items-center ${row}`}`}><Pin type={out} on /></div>
      {addPin && (
        <button type="button" className="absolute right-[3px] bottom-[2px] flex items-center gap-[2px]">
          Add pin
          <svg viewBox="0 0 5 5" className="h-[5px] w-[5px]"><path d="M2.500 0v5M0 2.500h5" stroke="#fff" strokeWidth="1.300" /></svg>
        </button>
      )}
    </div>
  );
}

function wirePath([, x1, y1, x2, y2, k]) {
  const t = k ?? (x2 - x1) / 3;
  return `M${x1} ${y1}C${x1 + t} ${y1} ${x2 - t} ${y2} ${x2} ${y2}`;
}

function Graph() {
  return (
    <div className="relative flex-1 overflow-hidden bg-[#262626]">
      <svg className="absolute inset-0 h-full w-full">
        <defs>
          <pattern id="cell" width="6.6875" height="6.6875" patternUnits="userSpaceOnUse" x="185" y="75">
            <path d="M0 .5H7M.5 0V7" stroke="#313131" strokeWidth=".7" />
          </pattern>
          <pattern id="block" width="53.5" height="53.5" patternUnits="userSpaceOnUse" x="185" y="75">
            <path d="M0 .5H54M.5 0V54" stroke="#1d1d1d" strokeWidth="1" />
          </pattern>
          <pattern id="major" width="428" height="428" patternUnits="userSpaceOnUse" x="185" y="75">
            <path d="M0 .5H428M.5 0V428" stroke="#121212" strokeWidth="1.5" />
          </pattern>
        </defs>
        <rect width="100%" height="100%" fill="url(#cell)" />
        <rect width="100%" height="100%" fill="url(#block)" />
        <rect width="100%" height="100%" fill="url(#major)" />
      </svg>

      <div className="absolute" style={{ left: PAN.x, top: PAN.y }}>
        {COMMENTS.map(c => (
          <div
            key={c.t}
            className={`absolute ${c.outer ? 'bg-white/33 shadow-[0_0_4px_#000,inset_0_0_8px_rgba(0,0,0,0.35)]' : 'bg-white/25 shadow-[0_0_4px_rgba(0,0,0,0.3)]'}`}
            style={{ left: c.x, top: c.y, width: c.w, height: c.h }}
          >
            <div className={`h-[16px] pl-[5px] text-[10px] leading-[17px] font-bold whitespace-nowrap text-[#ececec] [text-shadow:1px_1px_1px_#333] ${c.outer ? 'bg-[#a9a9a9]' : 'bg-[#ababab]'}`}>
              {c.t}
            </div>
            <svg viewBox="0 0 6 6" className="absolute right-px bottom-px h-[6px] w-[6px]"><path d="M6 0v6H0z" fill="#c0c0c0" opacity=".75" /></svg>
          </div>
        ))}

        <svg className="absolute top-0 left-0 h-px w-px overflow-visible" fill="none">
          {WIRES.map((w, i) => (
            <path key={i} d={wirePath(w)} stroke={C[w[0]]} strokeWidth={w[0] === 'exec' ? 1.6 : 1.1} opacity={w[0] === 'exec' ? 1 : 0.8} />
          ))}
          <path d="M495 599C518 597 506 565 501 545C496 522 494 506 510 504" stroke={C.obj} strokeWidth="1.1" opacity=".8" />
        </svg>

        {NODES.map((n, i) => <Node key={i} n={n} />)}
        <Getter label="Rotate Radius" pin="obj" x={397} y={515} w={55} h={15} />
        <Getter label="Rot Speed" pin="float" x={658} y={482} w={55} h={14} />
        <SetNode x={926} y={421} w={66} h={29} wired />
        <SetNode x={1288} y={582} w={77} h={31} />
        <OpNode sym="<" x={745} y={469} w={57} h={24} row="h-[11px]" out="red" center pins={[{ pin: 'float', on: true }, { pin: 'float', box: '20.0' }]} />
        <OpNode sym="+" x={745} y={502} w={57} h={25} row="h-[11px]" out="float" addPin pins={[{ pin: 'float', on: true }, { pin: 'float', box: '0.05' }]} />
        <OpNode sym="-" x={611} y={636} w={43} h={22} row="h-[10px]" out="vec" center pins={[{ pin: 'vec', on: true }, { pin: 'vec', on: true }]} />
        <OpNode sym="×" x={658} y={602} w={104} h={27} row="h-[12px]" out="vec" addPin pins={[{ pin: 'vec', on: true }, { pin: 'vec', axes: ['1.0', '1.0', '0.0'] }]} />
      </div>

      {/* breadcrumb bar */}
      <div className="relative flex h-[22px] items-center bg-[#111]/90 pl-[3px] text-[11px] leading-[14px] text-[#858585]">
        <Star size={11} strokeWidth={2} className="text-[#ccc]" />
        <span className="mx-[3px] h-[18px] w-px bg-[#444]" />
        <button type="button" aria-label="Back" className="flex w-[21px] justify-center"><ArrowBigLeft size={15} fill="#9a9a9a" stroke="none" /></button>
        <button type="button" aria-label="Forward" className="flex w-[25px] justify-center"><ArrowBigRight size={15} fill="#9a9a9a" stroke="none" /></button>
        <span className="mr-[6px] h-[18px] w-px bg-[#444]" />
        <GraphIcon className="mr-[7px] h-[11px] w-[14px]" />
        <span>BP_Ring</span>
        <ChevronRight size={12} strokeWidth={3} className="mx-px text-[#ddd]" />
        <span>Event Graph</span>
        <span className="mr-[3px] ml-auto text-[#383838]">Zoom -2</span>
      </div>

      <div className="pointer-events-none absolute right-[6px] bottom-[9px] text-[31px] leading-[36px] font-bold text-[#545454]">
        BLUEPRINT
      </div>
    </div>
  );
}

function GraphTab({ icon, label, w, active }) {
  return (
    <button
      type="button"
      className={`flex h-[12px] items-center gap-[4px] pl-[3px] text-[7px] leading-[8px] whitespace-nowrap ${w} ${active ? 'border-t border-[#a58a1c] bg-[#3c3c3c] text-[#c9c9c9]' : 'text-[#b5b5b5]'}`}
    >
      {icon}{label}
    </button>
  );
}

function Center() {
  return (
    <div className="flex min-w-0 flex-1 flex-col bg-[#222] pr-[3px] pl-[3px]">
      <div className="pl-[2px]">
        <PanelTab icon={<svg viewBox="0 0 9 9" className="h-[9px] w-[9px]"><path d="M2.500 2.500L8 8" stroke="#ddd" strokeWidth="1.600" /><path d="M.8 2.200Q1 4 3 3.500M2.500.8Q4 1.200 3.500 3" stroke="#ddd" fill="none" /><path d="M8 1L4.500 4.500 1.200 8" stroke="#9fb4d8" strokeWidth="1.400" /></svg>} label="Toolbar" />
      </div>
      <div className="flex h-[35px] items-stretch bg-[#3e3e3e] pt-px pb-px">
        <Tool icon="compile" label="Compile" w="w-[32px]" />
        <Drop label="Compile options" w="w-[19px] border-r border-[#303030]" />
        <Tool icon="save" label="Save" w="w-[38px]" />
        <Tool icon="browse" label="Browse" w="w-[31px] border-r border-[#303030] mr-px" />
        <Tool icon="find" label="Find" w="w-[36px]" />
        <Tool icon="hide" label="Hide Unrelated" w="w-[47px]" />
        <Drop label="Hide options" w="w-[23px] border-r border-[#303030]" />
        <Tool icon="settings" label="Class Settings" w="w-[60px]" />
        <Tool icon="defaults" label="Class Defaults" w="w-[49px] mr-[6px]" active />
        <Tool icon="sim" label="Simulation" w="w-[51px] border-x border-[#303030]" />
        <Tool icon="play" label="Play" w="w-[38px]" />
        <Drop label="Play options" w="w-[8px]" />
        <div className="ml-[4px] flex flex-col items-center pt-[9px] text-[7px] leading-[8px] text-[#c4c4c4]">
          <div className="relative w-[89px]">
            <select id="debug-filter" className="block h-[12px] w-full appearance-none bg-[#dedede] pl-[3px] text-[7px] leading-[12px] text-[#111]">
              <option>No debug object selected</option>
            </select>
            <Caret className="pointer-events-none absolute top-[5px] right-[3px] h-[3px] w-[4px] text-black" />
          </div>
          <label htmlFor="debug-filter" className="mt-px">Debug Filter</label>
        </div>
      </div>
      <div className="flex pt-[3px]">
        <GraphTab w="w-[88px]" icon={<ViewportIcon />} label="Viewport" />
        <GraphTab w="w-[82px]" icon={<span className="flex w-[7px] text-[#a9bff0]"><Fn className="text-[9px]" /></span>} label="Construction Scrip" />
        <GraphTab w="w-[83px]" icon={<GraphIcon className="h-[7px] w-[9px]" />} label="Event Graph" active />
      </div>
      <div className="mt-px flex min-h-0 flex-1 flex-col border border-[#444]">
        <Graph />
      </div>
    </div>
  );
}

/* ---------- window ---------- */

function TitleBar() {
  return (
    <header className="relative flex h-[15px] bg-[repeating-linear-gradient(135deg,#2a2a2a_0px,#2a2a2a_10px,#383838_10px,#383838_20px)]">
      <svg viewBox="0 0 14 14" className="mr-[9px] ml-px h-[13px] w-[14px] shrink-0">
        <path d="M1 5Q3 2 6 1.500 5 2.500 5 4v4.500q.5 1.500 2 1V4L6.500 3.500 9 2v7l1 .8 2.500-1.500Q11 12 6.500 12.500 3 12.500 2.500 9.500V5.500Q2 4.500 1 5z" fill="#fff" />
      </svg>
      {DOC_TABS.map((t, i) => (
        <button
          key={i}
          type="button"
          className={`mt-px flex shrink-0 items-center gap-[3px] text-[7px] leading-[8px] text-[#d2d2d2] [clip-path:polygon(4px_0,calc(100%-8px)_0,100%_100%,0_100%)] ${
            i === 0 ? '-mr-[5px] w-[114px] pl-[10px]' : '-mr-[6px] w-[111px] pl-[4px]'
          } ${t.name === 'BP_Ring' ? 'bg-linear-to-b from-[#8e8e8e] to-[#6f6f6f]' : 'bg-linear-to-b from-[#6a6a6a] to-[#4a4a4a]'}`}
        >
          <TabIcon type={t.icon} />
          <span>{t.name}</span>
        </button>
      ))}
      <svg viewBox="0 0 30 30" className="absolute -top-[8px] right-[48px] z-10 h-[30px] w-[30px]">
        <circle cx="15" cy="15" r="13" fill="#0d5a16" opacity=".55" />
        <circle cx="15" cy="15" r="13.500" fill="none" stroke="#1c8a24" strokeWidth="1" />
        <circle cx="15" cy="15" r="8" fill="#143a18" stroke="#18d02a" strokeWidth="1.300" />
        <path d="M10 13l5-2 5 2-3 3v3h-3v-3z" fill="#a9d0f5" />
      </svg>
      <div className="ml-auto flex h-[8px] items-center pr-[4px] text-white">
        {['min', 'max', 'close'].map(b => (
          <button key={b} type="button" aria-label={b} className={`flex h-[8px] items-center justify-center border-r border-b border-[#555] ${b === 'close' ? 'w-[21px]' : 'w-[14px]'}`}>
            <svg viewBox="0 0 6 6" className="h-[6px] w-[6px]" fill="none" stroke="#fff" strokeWidth="1.100">
              {b === 'min' && <path d="M0 4.500h6" />}
              {b === 'max' && <path d="M.5 2h3.500v3.500H.5zM2 2V.5h3.500V4H4" />}
              {b === 'close' && <path d="M.5.5l5 5M5.500.5l-5 5" />}
            </svg>
          </button>
        ))}
      </div>
    </header>
  );
}

export default function App() {
  return (
    <div className="flex h-screen flex-col overflow-hidden bg-[#1a1a1a] font-['Roboto',sans-serif]">
      <TitleBar />
      <nav className="flex h-[12px] items-center gap-[11px] bg-[#191919] pr-[5px] pl-[6px] text-[7px] leading-[8px] text-[#cfcfcf]">
        {['File', 'Edit', 'Asset', 'View', 'Debug', 'Window', 'Help'].map(m => (
          <button key={m} type="button">{m}</button>
        ))}
        <span className="ml-auto text-[#777]">Parent class: <a href="#actor" className="ml-[2px] text-[#7da7ea]">Actor</a></span>
      </nav>
      <main className="flex min-h-0 flex-1">
        <LeftSide />
        <Center />
        <RightSide />
      </main>
      <footer className="flex h-[2px] items-end bg-[#101010] pl-[27px]">
        <span className="h-px w-[192px] bg-[#e6dede]" />
        <span className="ml-[82px] h-px w-[27px] bg-[#555]" />
      </footer>
    </div>
  );
}
